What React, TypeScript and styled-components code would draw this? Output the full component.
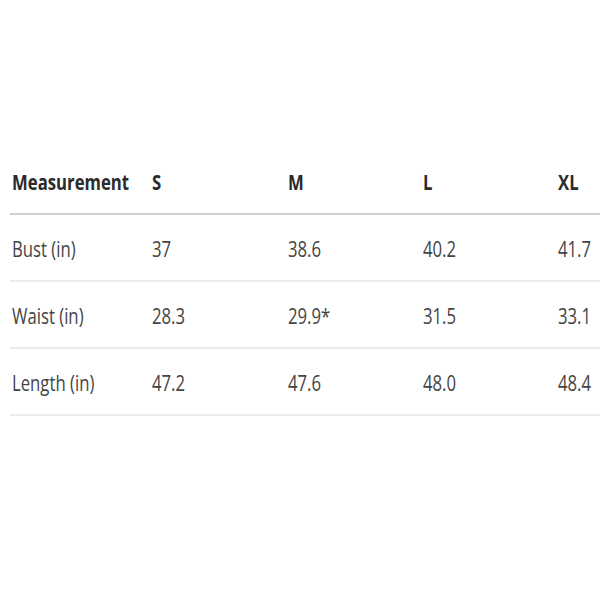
import styled, { createGlobalStyle } from 'styled-components';

const GlobalStyle = createGlobalStyle`
  html, body {
    margin: 0;
    padding: 0;
    background: #ffffff;
    overflow: hidden;
  }
`;

const Page = styled.div`
  width: 600px;
  height: 600px;
  overflow: hidden;
  padding: 148px 0 0 10px;
  box-sizing: border-box;
  font-family: "Open Sans", "Noto Sans", sans-serif;
`;

const Table = styled.div`
  display: grid;
  grid-template-columns: 140px 136px 135px 135px 135px;
  width: 681px;
`;

const Cell = styled.div<{ head?: boolean }>`
  height: 67px;
  display: flex;
  align-items: center;
  padding-left: 2px;
  box-sizing: border-box;
  border-bottom: 2px solid ${p => (p.head ? '#d0d0d0' : '#ececec')};
  white-space: nowrap;
`;

const Text = styled.span<{ head?: boolean }>`
  display: inline-block;
  transform: scaleX(0.76);
  transform-origin: left center;
  font-size: 22px;
  font-weight: ${p => (p.head ? 700 : 400)};
  color: ${p => (p.head ? '#2b2b2b' : '#444444')};
`;

const headers = ['Measurement', 'S', 'M', 'L', 'XL'];
const rows = [
  ['Bust (in)', '37', '38.6', '40.2', '41.7'],
  ['Waist (in)', '28.3', '29.9*', '31.5', '33.1'],
  ['Length (in)', '47.2', '47.6', '48.0', '48.4'],
];

function App() {
  return (
    <>
      <GlobalStyle />
      <Page>
        <Table>
          {headers.map(h => (
            <Cell key={h} head>
              <Text head>{h}</Text>
            </Cell>
          ))}
          {rows.map(r =>
            r.map((v, i) => (
              <Cell key={r[0] + i}>
                <Text>{v}</Text>
              </Cell>
            ))
          )}
        </Table>
      </Page>
    </>
  );
}

export default App;
